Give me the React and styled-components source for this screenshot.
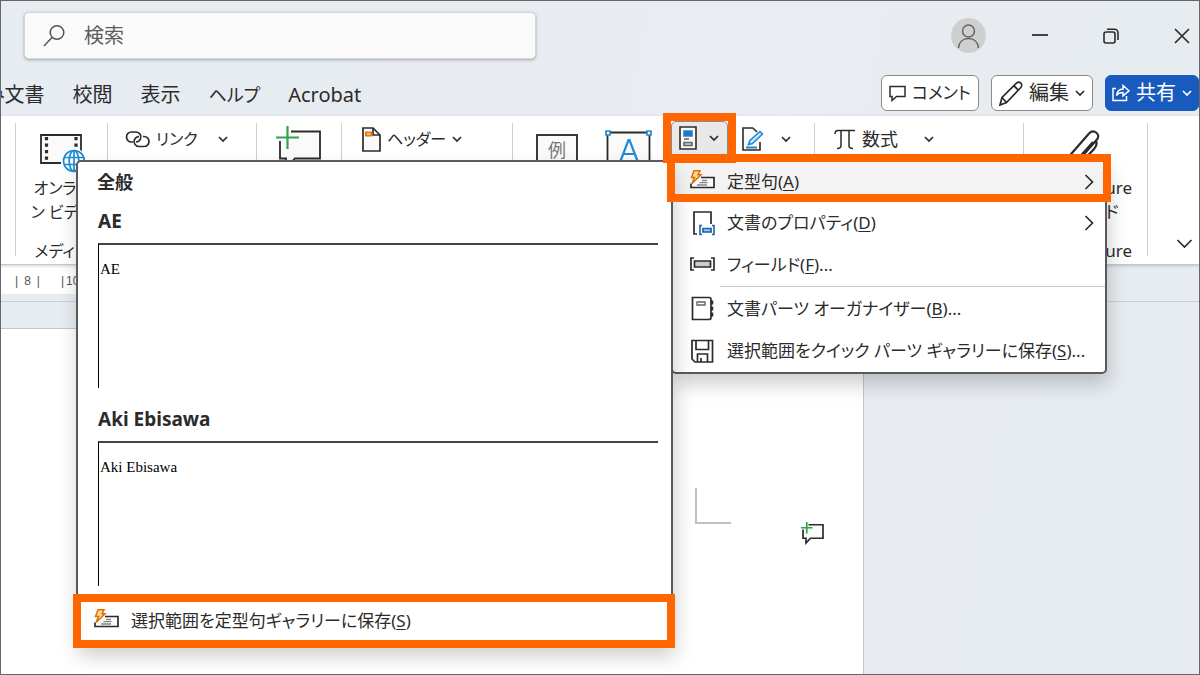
import React from "react";
import styled, { createGlobalStyle } from "styled-components";

const INK = "#2b2b2b";
const BLUE = "#1e8bd2";
const ORANGE = "#ff6600";

const GlobalStyle = createGlobalStyle`
  *, *::before, *::after { box-sizing: border-box; }
  body {
    margin: 0;
    color: ${INK};
    font-family: "Noto Sans", "Noto Sans CJK JP", sans-serif;
    font-feature-settings: "palt";
  }
  button, input {
    font: inherit;
    font-feature-settings: inherit;
    color: inherit;
    margin: 0;
    padding: 0;
    border: 0;
    background: none;
  }
  button { cursor: pointer; white-space: nowrap; }
  svg { display: block; flex: none; fill: none; stroke: ${INK}; }
  h2, h3, p { margin: 0; }
`;

const Frame = styled.div`
  display: flex;
  flex-direction: column;
  min-height: 100vh;
  overflow: hidden;
  border: 1px solid #666;
  background: linear-gradient(100deg, #e6ecf1 0%, #e9ecf2 60%, #e6ecf0 100%);
`;

const TitleBar = styled.header`
  display: flex;
  justify-content: space-between;
  align-items: center;
  padding: 11px 9px 11px 23px;
`;

const SearchBox = styled.label`
  display: flex;
  flex: 0 1 512px;
  align-items: center;
  gap: 19px;
  height: 47px;
  padding: 0 18px;
  border: 1px solid #d4d6d8;
  border-radius: 5px;
  background: #fafafa;
  box-shadow: 0 1px 3px rgba(0, 0, 0, 0.3);
`;

const SearchInput = styled.input`
  flex: 1;
  min-width: 0;
  font-size: 20px;
  line-height: 30px;
  outline: none;
  &::placeholder { color: #5c5c5c; opacity: 1; }
`;

const WindowControls = styled.div`
  display: flex;
  align-items: center;
  gap: 55px;
`;

const Avatar = styled.button`
  display: grid;
  place-items: center;
  width: 35px;
  height: 35px;
  margin-right: -9px;
  border-radius: 50%;
  background: #cfcfcf;
`;

const TabRow = styled.div`
  display: flex;
  justify-content: space-between;
  align-items: center;
  height: 46px;
`;

const Tabs = styled.nav`
  display: flex;
  gap: 28px;
  margin-left: -16px;
  padding-top: 3px;
`;

const Tab = styled.button`
  font-size: ${(p) => (p.$kana ? 18 : 20)}px;
  line-height: 30px;
`;

const TabActions = styled.div`
  display: flex;
  gap: 12px;
`;

const ActionButton = styled.button`
  display: flex;
  align-items: center;
  gap: 6px;
  height: 36px;
  padding: 0 ${(p) => (p.$primary ? 6 : 7)}px;
  border: 1px solid ${(p) => (p.$primary ? "#185abd" : "#8a8a8a")};
  border-radius: 6px;
  background: ${(p) => (p.$primary ? "#185abd" : "#fff")};
  color: ${(p) => (p.$primary ? "#fff" : INK)};
  font-size: ${(p) => (p.$kana ? 17 : 20)}px;
  line-height: 34px;
  svg { stroke: currentColor; }
`;

const Ribbon = styled.section`
  position: relative;
  z-index: 2;
  display: flex;
  padding: 5px 0 3px;
  background: #fff;
  border-bottom: 1px solid #c4c8cc;
  box-shadow: 0 1px 3px rgba(0, 0, 0, 0.18);
`;

const Group = styled.div`
  position: relative;
  display: flex;
  flex: none;
  align-items: flex-start;
  gap: ${(p) => p.$gap || 0}px;
  width: ${(p) => p.$width}px;
  min-height: 140px;
  padding-left: ${(p) => p.$indent || 0}px;
  &::after {
    content: "";
    position: absolute;
    top: 2px;
    right: 0;
    bottom: 5px;
    width: 1px;
    background: #cfcfcf;
  }
`;

const RibbonTail = styled.div`
  display: flex;
  flex: 1;
  align-items: flex-end;
  justify-content: flex-end;
  padding: 0 6px 12px;
`;

const Stack = styled.div`
  display: flex;
  flex: 1;
  flex-direction: column;
  justify-content: space-between;
  align-items: ${(p) => (p.$end ? "flex-end" : "center")};
  align-self: stretch;
  padding-right: ${(p) => (p.$end ? 16 : 0)}px;
`;

const LargeButton = styled.button`
  display: flex;
  flex-direction: column;
  align-items: inherit;
  gap: 2px;
  padding-top: ${(p) => p.$top || 0}px;
  font-size: ${(p) => (p.$end ? 17 : 16)}px;
  line-height: 24px;
  text-align: ${(p) => (p.$end ? "left" : "center")};
`;

const GroupLabel = styled.span`
  font-size: ${(p) => (p.$end ? 17 : 16)}px;
  line-height: 20px;
`;

const Command = styled.button`
  display: flex;
  align-items: center;
  gap: ${(p) => p.$gap || 6}px;
  height: 36px;
  font-size: ${(p) => (p.$kana ? 16 : 18)}px;
  line-height: 36px;
`;

const IconButton = styled.button`
  padding-top: ${(p) => p.$top}px;
  margin-left: ${(p) => p.$apart || 0}px;
`;

const Marked = styled.div`
  &::after {
    content: "";
    position: absolute;
    z-index: 3;
    inset: ${(p) => p.$inset || "-8px"};
    border: 8px solid ${ORANGE};
    pointer-events: none;
  }
`;

const QuickParts = styled(Marked)`
  position: relative;
  margin: 0 14px 0 19px;
`;

const QuickPartsButton = styled.button`
  display: flex;
  align-items: center;
  gap: 12px;
  width: 57px;
  height: 34px;
  padding: 0 7px;
  border: 1px solid #8a8a8a;
  border-radius: 5px 5px 0 0;
  background: #e8e8e8;
`;

const Menu = styled.div`
  position: absolute;
  z-index: 2;
  top: calc(100% + 5px);
  left: 0;
  width: 436px;
  border: 2px solid #5a5a5a;
  border-radius: 5px;
  background: #fff;
  box-shadow: 2px 10px 20px rgba(0, 0, 0, 0.2);
`;

const MarkedRow = styled(Marked)`
  position: relative;
  margin: 0 2px;
  background: #f3f3f3;
  button { height: 40px; padding: 0 9px 0 15px; }
`;

const MenuItem = styled.button`
  display: flex;
  align-items: center;
  gap: 12px;
  width: 100%;
  height: 42px;
  padding: 0 11px 0 17px;
  font-size: 17px;
  line-height: 26px;
  text-align: left;
  u { text-underline-offset: 2px; }
`;

const MenuText = styled.span`
  flex: 1;
`;

const Divider = styled.hr`
  height: 1px;
  margin: 0 0 1px 47px;
  border: 0;
  background: #c8c8c8;
`;

const Gallery = styled.div`
  position: absolute;
  top: -2px;
  right: 100%;
  width: 597px;
  border: 2px solid #5a5a5a;
  border-radius: 5px 0 0 5px;
  background: #fff;
  box-shadow: 2px 10px 20px rgba(0, 0, 0, 0.2);
`;

const GalleryHeading = styled.h2`
  padding-left: 19px;
  font-size: 18px;
  line-height: 40px;
`;

const Entry = styled.section`
  margin: 0 13px 12px 20px;
`;

const EntryTitle = styled.h3`
  font-size: 19px;
  line-height: 38px;
`;

const Preview = styled.div`
  height: 145px;
  margin-top: 3px;
  padding: 14px 1px;
  border-top: 2px solid #444;
  border-left: 1px solid #000;
  color: #000;
  font-family: "Liberation Serif", serif;
  font-size: 15px;
  line-height: 20px;
`;

const GalleryFooter = styled(Marked)`
  position: relative;
  margin: 16px 4px 4px 3px;
  button { height: 38px; padding: 0 13px; }
`;

const Ruler = styled.div`
  display: flex;
  gap: 21px;
  width: 72%;
  padding: 3px 0 0 14px;
  background: #fff;
  color: #555;
  font-family: "Liberation Sans", sans-serif;
  font-size: 12px;
  line-height: 26px;
`;

const RulerStep = styled.span`
  display: flex;
  gap: ${(p) => p.$gap}px;
`;

const Canvas = styled.main`
  display: flex;
  flex: 1;
  flex-direction: column;
  margin-top: 7px;
  padding-top: 26px;
  border-top: 1px solid #ccd0d5;
`;

const Page = styled.article`
  display: flex;
  flex: 1;
  justify-content: flex-end;
  align-items: flex-start;
  gap: 70px;
  width: 72%;
  padding: 159px 39px 40px 0;
  border: solid #c3c6ca;
  border-width: 1px 1px 0 0;
  background: #fff;
`;

const CropMark = styled.div`
  width: 36px;
  height: 36px;
  border: solid #c0c0c0;
  border-width: 0 0 2px 2px;
`;

const AddComment = styled.button`
  margin-top: 34px;
`;

const ClipSlot = styled.span`
  margin-right: 30px;
`;

const SampleFrame = styled.span`
  display: grid;
  place-items: start center;
  width: 42px;
  height: 42px;
  border: 2px solid #3a3a3a;
  background: #fafafa;
  color: #777;
  font-size: 18px;
  line-height: 28px;
`;

const Chevron = () => (
  <svg width="10" height="8" viewBox="0 0 10 8" strokeWidth="1.7">
    <path d="M1 2l4 4 4-4" />
  </svg>
);

const ChevronRight = () => (
  <svg width="10" height="16" viewBox="0 0 10 16" strokeWidth="1.7">
    <path d="M1.5 1l7 7-7 7" />
  </svg>
);

const SearchIcon = () => (
  <svg width="22" height="24" viewBox="0 0 22 24" strokeWidth="1.5" stroke="#555">
    <g stroke="#555">
      <circle cx="14" cy="8.5" r="6.8" />
      <path d="M9 13.500L1 22" />
    </g>
  </svg>
);

const PersonIcon = () => (
  <svg width="23" height="26" viewBox="0 0 23 26" strokeWidth="1.5">
    <circle cx="11.5" cy="8" r="6" stroke="#666" />
    <path d="M1.5 25c.5-6 4.500-9.500 10-9.500s9.500 3.500 10 9.500" stroke="#666" />
  </svg>
);

const MinimizeIcon = () => (
  <svg width="16" height="16" viewBox="0 0 16 16" strokeWidth="2">
    <path d="M0 7h16" stroke="#444" />
  </svg>
);

const RestoreIcon = () => (
  <svg width="16" height="16" viewBox="0 0 16 16" strokeWidth="1.6">
    <rect x="1" y="4" width="11" height="11" rx="2" />
    <path d="M4 1.200h7.500a3.500 3.500 0 0 1 3.500 3.500V12" />
  </svg>
);

const CloseIcon = () => (
  <svg width="16" height="16" viewBox="0 0 16 16" strokeWidth="1.7">
    <path d="M1 1l14 14M15 1L1 15" />
  </svg>
);

const BubbleIcon = () => (
  <svg width="17" height="17" viewBox="0 0 17 17" strokeWidth="1.5">
    <path d="M1 1.500h15v10H7.500L3 15.500v-4H1z" />
  </svg>
);

const PencilIcon = () => (
  <svg width="24" height="25" viewBox="0 0 24 25" strokeWidth="1.7">
    <path d="M1 24l2-7.500L17.500 2.200a3 3 0 0 1 4.300 4.300L7.500 21.500zM3 16.500l4.500 5M15 4.800l4.500 4.500M1 24l2.500-.7" />
  </svg>
);

const ShareIcon = () => (
  <svg width="18" height="18" viewBox="0 0 18 18" strokeWidth="1.5">
    <path d="M4 4.500H1v12h13.500V12" />
    <path d="M4.500 11.500C5 7.500 7 5.200 11 5V1.500l6 5.300-6 5V8.500c-2.800 0-5 .8-6.500 3z" />
  </svg>
);

const VideoIcon = () => (
  <svg width="46" height="44" viewBox="0 0 46 44">
    <path d="M22 33H2V5h40v16" strokeWidth="1.8" fill="#fafafa" />
    <path d="M7.500 7v26M37 7v12" strokeWidth="3.2" strokeDasharray="3.200 3.300" />
    <circle cx="35" cy="31" r="12.500" fill="#fff" stroke="none" />
    <g stroke={BLUE} strokeWidth="1.7">
      <circle cx="35" cy="31" r="10.5" />
      <ellipse cx="35" cy="31" rx="4.8" ry="10.5" />
      <path d="M35 20.500v21M25 27.500h20M25 34.500h20" />
    </g>
  </svg>
);

const LinkIcon = () => (
  <svg width="25" height="17" viewBox="0 0 25 17" strokeWidth="1.7">
    <path d="M8 11H6.500a5 5 0 0 1 0-10H11a5 5 0 0 1 4.500 7c-.8 1.800-2.500 2.900-4.500 3" />
    <path d="M18 5.500h1a5 5 0 0 1 0 10h-5a5 5 0 0 1-4.400-7.200c.9-1.700 2.400-2.700 4.400-2.800" />
  </svg>
);

const NewCommentIcon = ({ size = 46 }) => (
  <svg width={size} height={size} viewBox="0 0 46 46">
    <path
      d="M15 5.500h29v27H19L10 42v-9.500H4V15"
      strokeWidth={size > 30 ? 1.8 : 3.4}
      fill="#fafafa"
    />
    <path d="M0 0h13v14H0z" fill="#fff" stroke="none" />
    <path d="M11.500 0v23M0 11.500h23" stroke="#2ea44a" strokeWidth={size > 30 ? 2.2 : 3.4} />
  </svg>
);

const HeaderIcon = () => (
  <svg width="19" height="25" viewBox="0 0 19 25" strokeWidth="1.7">
    <path d="M1 1h10l7 7v16H1z" fill="#fafafa" />
    <path d="M11 1v7h7" />
    <path d="M4 5.500h5.500v3H4z" stroke="#e8760c" strokeWidth="2" />
  </svg>
);

const TextBoxIcon = () => (
  <svg width="47" height="46" viewBox="0 0 47 46">
    <path d="M2.500 2.500h42v41h-42z" strokeWidth="1.8" fill="#fafafa" />
    <path d="M15.500 31l8-21h1l8 21M18.500 24h11" stroke={BLUE} strokeWidth="2.2" />
    <path d="M1 1h4v4H1zM42 1h4v4h-4z" fill="#fff" stroke={BLUE} strokeWidth="1.7" />
  </svg>
);

const QuickPartsIcon = () => (
  <svg width="18" height="24" viewBox="0 0 18 24" strokeWidth="1.6">
    <path d="M1 1h16v22H1z" fill="#fafafa" />
    <path d="M5 5h8v5H5z" fill="#1e78c8" stroke="#2a7fc6" />
    <path d="M5 13h5" stroke="#666" />
    <path d="M5 16.500h8v3H5z" fill="#ccc" stroke="#666" />
  </svg>
);

const SignatureIcon = () => (
  <svg width="22" height="24" viewBox="0 0 22 24" strokeWidth="1.6">
    <path d="M11 1H1v22h17v-8M11 1l4 4" fill="#fafafa" />
    <path d="M6.500 17.500l1.500-4L18 4.500l2.500 2.500L10.500 16.500z" fill="#cfe6f7" stroke={BLUE} />
    <path d="M4 20.500h11" stroke={BLUE} strokeWidth="2" />
  </svg>
);

const PiIcon = () => (
  <svg width="22" height="21" viewBox="0 0 22 21" strokeWidth="1.5">
    <path d="M1 5c0-2.500 1-3.500 3-3.500h17M7 1.500v15c0 2-1 3-4 3M15 1.500v15c0 2 1 3 4 3" />
  </svg>
);

const ClipIcon = () => (
  <svg width="38" height="46" viewBox="0 0 38 46" strokeWidth="2.2">
    <path d="M1 33L25 5.500c5-5 12 1 8 6L14 33M32 13c1.500 3 .5 5-2 8L19 33" />
    <path d="M29 14L12 33" />
  </svg>
);

const WideChevron = () => (
  <svg width="17" height="10" viewBox="0 0 17 10" strokeWidth="1.7">
    <path d="M1.500 1l7 7 7-7" />
  </svg>
);

const AutoTextIcon = () => (
  <svg width="25" height="25" viewBox="0 0 25 25" strokeWidth="1.7">
    <path d="M11 7.500h13v10H1v-4" fill="#fafafa" />
    <path d="M12 10.500h5M9.500 12.700h8M7 15h10" stroke="#888" strokeWidth="1.3" />
    <path d="M4 .8h6L8 4.800h3L2 13.500l2.500-6H1.500z" fill="#fbd9a8" stroke="#e07000" strokeWidth="1.5" />
  </svg>
);

const PropertyIcon = () => (
  <svg width="25" height="26" viewBox="0 0 25 26" strokeWidth="1.7">
    <path d="M7 24H4V2h17v12" />
    <path d="M12 15.500h-2v9h2M22 15.500h2v9h-2" stroke="#1a5fa8" strokeWidth="1.6" />
    <path d="M13 18.500h8v3.500h-8z" fill="#9cc8f0" stroke="#1a5fa8" />
  </svg>
);

const FieldIcon = () => (
  <svg width="25" height="25" viewBox="0 0 25 25" strokeWidth="1.7">
    <path d="M4 5H1v12h3M21 5h3v12h-3" />
    <path d="M4.500 8h16v6h-16z" fill="#ccc" />
  </svg>
);

const OrganizerIcon = () => (
  <svg width="25" height="26" viewBox="0 0 25 26" strokeWidth="1.7">
    <path d="M2.500 1.500H19a2 2 0 0 1 2 2v18a2 2 0 0 1-2 2H2.500z" />
    <path d="M7 6h8v3H7z" stroke="#666" strokeWidth="1.4" />
    <path d="M22 4.500v4M22 10.500v4M22 16.500v4" strokeWidth="2.5" />
  </svg>
);

const SaveIcon = () => (
  <svg width="25" height="25" viewBox="0 0 25 25" strokeWidth="1.7">
    <path d="M2 1.500h20.500v21.500H5L2 20z" />
    <path d="M6 1.500v9h12.500v-9M7.500 23v-8h10v8M11 23v-4" />
  </svg>
);

const ENTRIES = ["AE", "Aki Ebisawa"];

const AutoTextGallery = () => (
  <Gallery>
    <GalleryHeading>全般</GalleryHeading>
    {ENTRIES.map((name) => (
      <Entry key={name}>
        <EntryTitle>{name}</EntryTitle>
        <Preview>{name}</Preview>
      </Entry>
    ))}
    <GalleryFooter>
      <MenuItem>
        <AutoTextIcon />
        <MenuText>選択範囲を定型句ギャラリーに保存(<u>S</u>)</MenuText>
      </MenuItem>
    </GalleryFooter>
  </Gallery>
);

const QuickPartsMenu = () => (
  <Menu>
    <MarkedRow $inset="-8px -8px 0">
      <MenuItem>
        <AutoTextIcon />
        <MenuText>定型句(<u>A</u>)</MenuText>
        <ChevronRight />
      </MenuItem>
    </MarkedRow>
    <MenuItem>
      <PropertyIcon />
      <MenuText>文書のプロパティ(<u>D</u>)</MenuText>
      <ChevronRight />
    </MenuItem>
    <MenuItem>
      <FieldIcon />
      <MenuText>フィールド(<u>F</u>)...</MenuText>
    </MenuItem>
    <Divider />
    <MenuItem>
      <OrganizerIcon />
      <MenuText>文書パーツ オーガナイザー(<u>B</u>)...</MenuText>
    </MenuItem>
    <MenuItem>
      <SaveIcon />
      <MenuText>選択範囲をクイック パーツ ギャラリーに保存(<u>S</u>)...</MenuText>
    </MenuItem>
    <AutoTextGallery />
  </Menu>
);

export default function App() {
  return (
    <Frame>
      <GlobalStyle />
      <TitleBar>
        <SearchBox>
          <SearchIcon />
          <SearchInput type="text" placeholder="検索" aria-label="検索" />
        </SearchBox>
        <WindowControls>
          <Avatar aria-label="アカウント"><PersonIcon /></Avatar>
          <button aria-label="最小化"><MinimizeIcon /></button>
          <button aria-label="元に戻す"><RestoreIcon /></button>
          <button aria-label="閉じる"><CloseIcon /></button>
        </WindowControls>
      </TitleBar>

      <TabRow>
        <Tabs>
          <Tab>み文書</Tab>
          <Tab>校閲</Tab>
          <Tab>表示</Tab>
          <Tab $kana>ヘルプ</Tab>
          <Tab>Acrobat</Tab>
        </Tabs>
        <TabActions>
          <ActionButton $kana><BubbleIcon />コメント</ActionButton>
          <ActionButton><PencilIcon />編集<Chevron /></ActionButton>
          <ActionButton $primary><ShareIcon />共有<Chevron /></ActionButton>
        </TabActions>
      </TabRow>

      <Ribbon>
        <Group $width={15} />
        <Group $width={92}>
          <Stack>
            <LargeButton $top={9}>
              <VideoIcon />
              <span>オンライ<br />ン ビデオ</span>
            </LargeButton>
            <GroupLabel>メディア</GroupLabel>
          </Stack>
        </Group>
        <Group $width={149} $indent={17} $gap={20}>
          <Command $kana><LinkIcon />リンク</Command>
          <Command aria-label="リンクのオプション"><Chevron /></Command>
        </Group>
        <Group $width={85} $indent={19}>
          <IconButton $top={5} aria-label="新しいコメント"><NewCommentIcon /></IconButton>
        </Group>
        <Group $width={171} $indent={20}>
          <Command $kana><HeaderIcon />ヘッダー<Chevron /></Command>
        </Group>
        <Group $width={302} $indent={23}>
          <IconButton $top={13}><SampleFrame>例</SampleFrame></IconButton>
          <IconButton $top={9} $apart={27} aria-label="テキスト ボックス"><TextBoxIcon /></IconButton>
          <QuickParts>
            <QuickPartsButton aria-label="クイック パーツ">
              <QuickPartsIcon />
              <Chevron />
            </QuickPartsButton>
            <QuickPartsMenu />
          </QuickParts>
          <Command $gap={17} aria-label="署名欄"><SignatureIcon /><Chevron /></Command>
        </Group>
        <Group $width={209} $indent={19} $gap={26}>
          <Command><PiIcon />数式</Command>
          <Command aria-label="数式のオプション"><Chevron /></Command>
        </Group>
        <Group $width={124}>
          <Stack $end>
            <LargeButton $top={7} $end>
              <ClipSlot><ClipIcon /></ClipSlot>
              <span>ure<br />ド</span>
            </LargeButton>
            <GroupLabel $end>ure</GroupLabel>
          </Stack>
        </Group>
        <RibbonTail>
          <button aria-label="リボンの表示オプション"><WideChevron /></button>
        </RibbonTail>
      </Ribbon>

      <Ruler>
        <RulerStep $gap={6}><span>|</span><span>8</span><span>|</span></RulerStep>
        <RulerStep $gap={2}><span>|</span><span>10</span></RulerStep>
      </Ruler>

      <Canvas>
        <Page>
          <CropMark />
          <AddComment aria-label="コメントを追加"><NewCommentIcon size={23} /></AddComment>
        </Page>
      </Canvas>
    </Frame>
  );
}
